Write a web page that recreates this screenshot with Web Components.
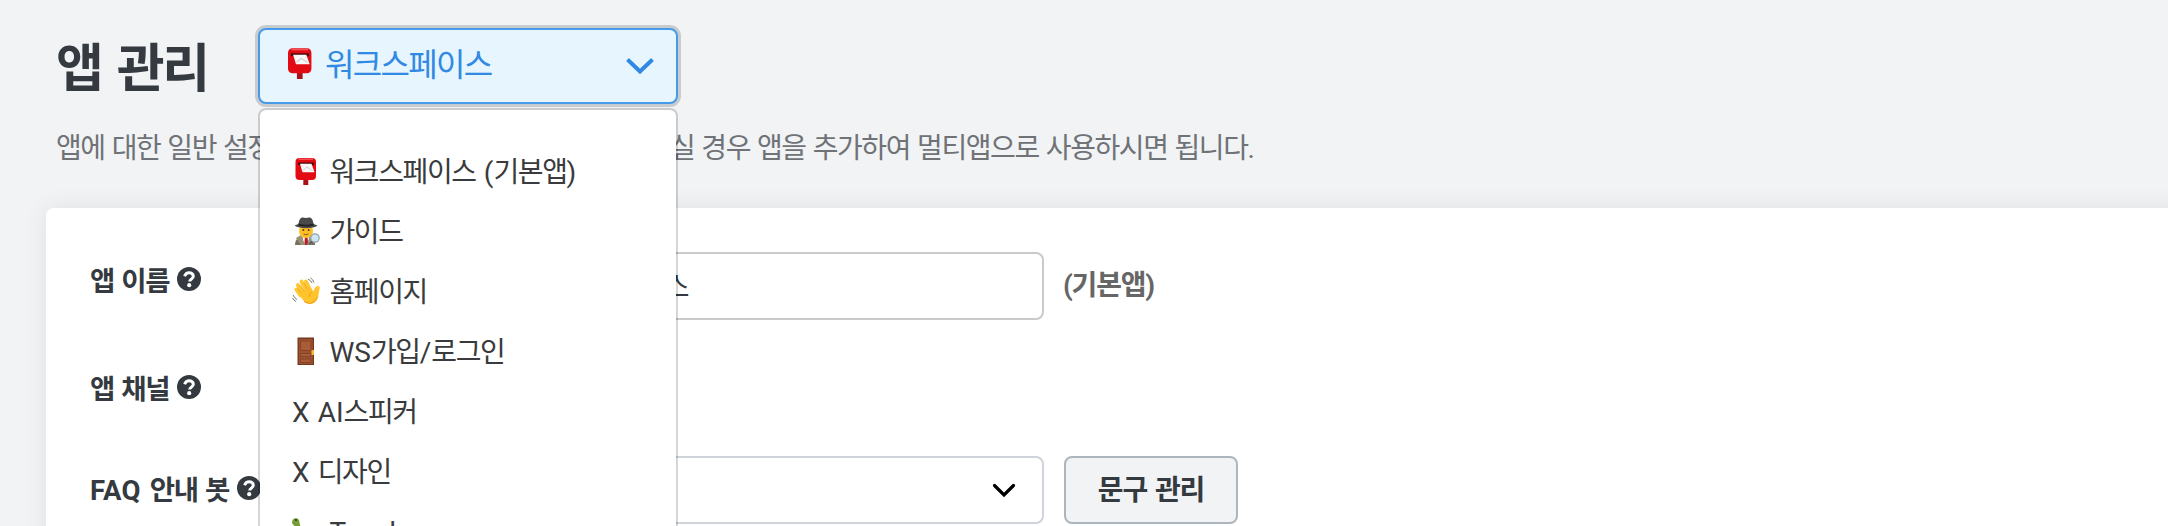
<!DOCTYPE html>
<html lang="ko"><head><meta charset="utf-8"><title>앱 관리</title>
<style>
html,body{margin:0;height:526px;overflow:hidden;background:#f1f3f5}
body{font-family:Roboto,"Noto Sans CJK KR",sans-serif;color:#343a40}
</style></head><body><app-page></app-page>
<script>
const define=(name,html,init)=>customElements.define(name,class extends HTMLElement{
 constructor(){super();this.attachShadow({mode:'open'}).innerHTML=html;}
 connectedCallback(){if(init)init.call(this,this.shadowRoot);}
});
const icons={
post:`<path d="M11.3 20h5v8h-5z" fill="#a8131b"/><rect x="3.500" y="1" width="20.500" height="22" rx="4" fill="#e30b13"/><path d="M6.500 2.200h14.500" stroke="#f4555a" stroke-width="1.400"/><path d="M6 5.500h16v2.500h-16z" fill="#4b090b"/><path d="M8 6.700h11.500l3 8.500H10.500z" fill="#f7f7f7"/><path d="M11 13.500l4-3.500 5.500 3.500" fill="none" stroke="#c9c9cc" stroke-width=".9"/>`,
agent:`<path d="M3 28c0-6 4-9 11-9s9 3 9 9z" fill="#786f5e"/><path d="M10 18h8l-2 10h-4z" fill="#f4f4f0"/><path d="M13 20h2.500l.8 8h-4z" fill="#b71c2d"/><path d="M4 21l5-3 4 10H9zM22 21l-4-3-3 10h4z" fill="#9b9078"/><ellipse cx="14" cy="14" rx="7" ry="7" fill="#fdbf23"/><circle cx="11.400" cy="13" r="1" fill="#4e351c"/><circle cx="16.600" cy="13" r="1" fill="#4e351c"/><path d="M11.500 17q2.500 1.500 5 0" stroke="#92572b" fill="none"/><path d="M6.500 7c1-7 3.500-7 7.500-6 4-1 6.500-1 7.500 6l4 1.500C22 12 7 12 2.500 8.500z" fill="#4a4947"/><path d="M6.500 6.500q7.500 2.500 15 0v2q-7.500 2-15 0z" fill="#222"/><circle cx="23" cy="21" r="4.200" fill="#cde5f3" stroke="#8fa5b2" stroke-width="1.200"/><path d="M20 24.500l-3 3" stroke="#5a5652" stroke-width="1.700"/>`,
wave:`<path d="M8.500 18.500L4.300 12.500M11.800 17L5.700 8M15 15L9.500 4.500M18.500 13.500L14 4.500" stroke="#ffc832" stroke-width="3.800" stroke-linecap="round"/><path d="M7 17.500L18.500 10.500 21.500 14.500Q22.500 11 24 9.500C26.800 7.800 28.500 10 27.500 12 26.300 18 27 22 22.500 25.500 17.500 29 14 26.500 11 23z" fill="#ffc42c"/><path d="M9 16L5.500 11.500M12.300 14.500L8 8M15.700 12.500L12 6M20 15q-3 1-2.700 5" stroke="#e99b16" stroke-width=".8" fill="none"/><path d="M12 24.500q8.500 5 13.500-4" stroke="#eb9d19" stroke-width="1" fill="none"/><path d="M16 2q2.500 1 4 4M18.500.800Q21 2.500 22 5.500M1 18q1.500 3 4 4.500M.500 21q1.500 2.500 3.500 3.500" stroke="#777" fill="none"/>`,
door:`<path d="M5.500 .5h16.500v27.500H5.500z" fill="#75371e"/><path d="M6.800 2h14v25h-14z" fill="#9c522f"/><path d="M8.500 4h10.500v9.500H8.500zM8.500 16.500h10.500v3H8.500zM8.500 22h10.500v3.500H8.500z" fill="#a95c36" stroke="#85442a" stroke-width="1"/><path d="M19.500 13h2.500v5h-2.500z" fill="#eebb32"/>`,
turtle:`<path d="M0 6Q0 1.200 3.800 1.200T7.500 6L10 15 20 18 17 24H7L3 10z" fill="#769d33"/><circle cx="4" cy="3" r="1" fill="#263314"/>`
};
define('pic-icon',`<style>:host{display:block;flex:none;width:28px;height:28px}svg{display:block;width:100%;height:100%}</style><svg viewBox="0 0 28 28"></svg>`,function(r){r.querySelector('svg').innerHTML=icons[this.getAttribute('name')]});
define('help-icon',`<style>:host{display:block;flex:none;width:24px;height:24px}svg{display:block}</style><svg width="24" height="24" viewBox="0 0 24 24"><circle cx="12" cy="12" r="12" fill="#343a40"/><path d="M7.600 9.200C8.600 6.700 10 5.800 12.100 5.800c2.400 0 4.200 1.400 4.200 3.400 0 2.900-3.600 2.900-3.600 5.400" fill="none" stroke="#fff" stroke-width="3"/><circle cx="12.200" cy="18.200" r="2.100" fill="#fff"/></svg>`);
define('app-title',`<style>:host{display:block;font-weight:700;font-size:52px;line-height:84px;letter-spacing:-2.300px;word-spacing:4.500px;white-space:nowrap}</style><slot></slot>`);
define('app-desc',`<style>:host{display:flex;font-size:28px;line-height:40px;letter-spacing:-1.400px;word-spacing:1.400px;color:#6f7276;white-space:nowrap}::slotted(:first-child){width:614px}</style><slot></slot>`);
define('app-trigger',`<style>:host{box-sizing:border-box;display:flex;align-items:flex-start;width:420px;height:76px;border:2px solid #459bea;border-radius:8px;background:#e7f5ff;box-shadow:0 0 0 3px #c9ccce;padding:17px 22px 0 24px;color:#308ae3;font-size:32px;letter-spacing:-1.700px;line-height:36px}pic-icon{width:32px;height:32px;margin-right:9px}.t{flex:1}svg{margin-top:9px}</style><pic-icon name="post"></pic-icon><span class="t"><slot></slot></span><svg width="28" height="20" viewBox="0 0 28 20"><path d="M1.500 3.500L14 15.500 26.500 3.500" fill="none" stroke="#308ae3" stroke-width="4"/></svg>`);
define('app-option',`<style>:host{display:flex;align-items:center;height:60px;padding-left:32px;font-size:28px;letter-spacing:-1.400px;word-spacing:1.200px;color:#3a3b3c;white-space:nowrap}pic-icon{margin-right:9.500px}.t{margin-top:-2px}::slotted(span){letter-spacing:0}:host([icon=turtle]) .t{margin-top:2px}</style><span class="t"><slot></slot></span>`,function(r){if(this.hasAttribute('icon'))r.querySelector('.t').insertAdjacentHTML('beforebegin',`<pic-icon name="${this.getAttribute('icon')}"></pic-icon>`)});
define('app-menu',`<style>:host{box-sizing:border-box;display:block;width:420px;height:480px;border:2px solid rgba(0,0,0,.16);border-radius:8px;background:#fff;background-clip:padding-box;padding-top:31px}</style><slot></slot>`);
define('app-picker',`<style>:host{display:block;position:relative}app-menu{position:absolute;left:0;top:80px;z-index:5}</style><app-trigger>워크스페이스</app-trigger><app-menu>
<app-option icon="post">워크스페이스<span> (</span>기본앱)</app-option><app-option icon="agent">가이드</app-option><app-option icon="wave">홈페이지</app-option><app-option icon="door"><span>WS</span>가입<span>/</span>로그인</app-option><app-option><span>X AI</span>스피커</app-option><app-option><span>X </span>디자인</app-option><app-option icon="turtle"><span>Teach</span></app-option></app-menu>`);
define('app-label',`<style>:host{display:flex;align-items:center;gap:8px;width:430px;flex:none;height:40px;font-size:27.500px;font-weight:700;letter-spacing:-1.400px;word-spacing:2px;white-space:nowrap}::slotted(span){letter-spacing:.300px}</style><span><slot></slot></span><help-icon></help-icon>`);
define('app-field',`<style>:host{box-sizing:border-box;display:flex;align-items:center;justify-content:space-between;width:524px;height:68px;flex:none;border:2px solid #c9cacc;border-radius:8px;background:#fff;padding:0 26px 2px 20px;font-size:28px;letter-spacing:-1.400px}:host([select]){border-color:#ced4da;padding-bottom:0}</style><slot></slot>`,function(r){if(this.hasAttribute('select'))r.innerHTML+=`<svg width="24" height="16" viewBox="0 0 24 16"><path d="M2.500 3.500L12 13 21.500 3.500" fill="none" stroke="#000" stroke-width="3.200" stroke-linecap="round"/></svg>`});
define('app-button',`<style>:host{box-sizing:border-box;display:flex;align-items:center;justify-content:center;width:174px;height:68px;border:2px solid #adb5bd;border-radius:8px;background:#f1f3f5;padding-bottom:4px;font-size:28px;font-weight:700;letter-spacing:-1.100px;word-spacing:2px}</style><slot></slot>`);
define('app-row',`<style>:host{display:flex;align-items:flex-start}::slotted(app-button){margin-left:20px}::slotted(b){margin-left:19px;font-size:28px;line-height:68px;letter-spacing:-1.200px;color:#666}</style><slot></slot>`);
define('app-card',`<style>:host{display:block;box-sizing:border-box;height:360px;margin:0 -40px 0 46px;padding:44px 0 0 44px;background:#fff;border-radius:8px 0 0 0;box-shadow:0 0 24px rgba(0,0,0,.08)}</style><slot></slot>`);
define('app-page',`<style>:host{display:block;height:526px;overflow:hidden}header{display:flex;padding-top:28px;height:76px}app-title{width:202px;padding-left:56px}app-desc{margin:25px 0 39px 56px}.one app-label{margin-top:7px}.two{height:40px;margin:47px 0 49px}.three app-label{margin-top:12px}</style>
<header><app-title>앱 관리</app-title><app-picker></app-picker></header>
<app-desc><span>앱에 대한 일반 설정</span><span>실 경우 앱을 추가하여 멀티앱으로 사용하시면 됩니다.</span></app-desc>
<app-card><app-row class="one"><app-label>앱 이름</app-label><app-field>워크스페이스</app-field><b>(기본앱)</b></app-row>
<app-row class="two"><app-label>앱 채널</app-label></app-row>
<app-row class="three"><app-label><span>FAQ </span>안내 봇</app-label><app-field select><span></span></app-field><app-button>문구 관리</app-button></app-row></app-card>`);
</script></body></html>
